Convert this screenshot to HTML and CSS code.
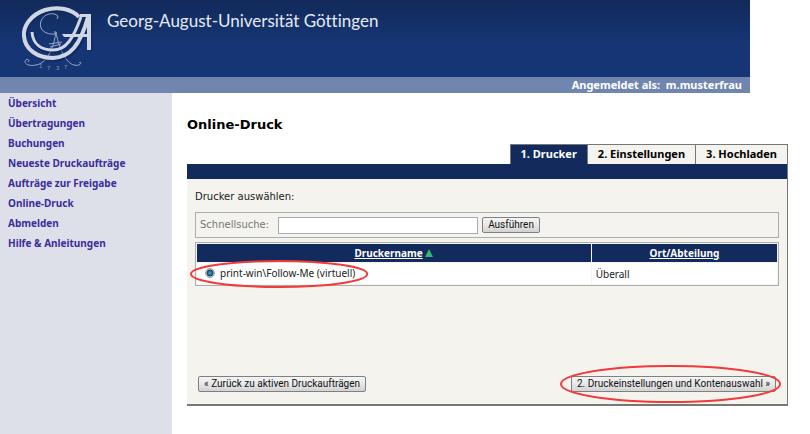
FILE: index.html
```html
<!DOCTYPE html>
<html lang="de">
<head>
<meta charset="utf-8">
<title>Online-Druck</title>
<link rel="stylesheet" href="styles.css">
</head>
<body>
<header class="header">
  <div class="banner">
    <svg class="logo" viewBox="0 0 76 70" aria-hidden="true">
      <g fill="none" stroke="#9aa8c8" stroke-width="1">
        <path d="M38 13C34 9 24 10 21 18C18 27 26 32 35 31M38 13L37 16M35 31L35 28"/>
        <path d="M36 29C34 43 28 60 16 62C7 64 3 59 6 57C8 55 10 58 8 59M36 29C38 42 45 60 54 62C62 64 62 57 59 60M29 41L42 39M30 44L41 41"/>
      </g>
      <g fill="none" stroke="#0b2355" stroke-opacity=".5" stroke-width="5">
        <path d="M60 15C53 7 39 4 26 8C11 13 4 25 5 34C6 48 19 56 34 56C54 55 63 42 67 16"/>
        <path d="M13 31C14 43 23 48 34 48C49 48 56 37 63 15"/>
        <path d="M70 13V48"/>
      </g>
      <g fill="none" stroke="#d0d6e5" stroke-width="3">
        <path d="M59 14C52 6 38 3 25 7C10 12 3 24 4 33C5 47 18 55 33 55C50 54 60 43 68 14" stroke-width="4"/>
        <path d="M12 29C13 42 22 47 33 47C46 47 53 36 61 14"/>
      </g>
      <path d="M60 11H71V47H67V34H44L42 31H67V14H60Z" fill="#d0d6e5"/>
      <g class="logo-year"><text x="19" y="65">1</text><text x="27" y="67">7</text><text x="36" y="67">3</text><text x="44" y="66">7</text></g>
    </svg>
    <div class="university">Georg-August-Universität Göttingen</div>
  </div>
  <div class="userbar">Angemeldet als:&nbsp; m.musterfrau</div>
</header>
<div class="layout">
  <nav class="sidebar">
    <a href="#">Übersicht</a>
    <a href="#">Übertragungen</a>
    <a href="#">Buchungen</a>
    <a href="#">Neueste Druckaufträge</a>
    <a href="#">Aufträge zur Freigabe</a>
    <a href="#">Online-Druck</a>
    <a href="#">Abmelden</a>
    <a href="#">Hilfe &amp; Anleitungen</a>
  </nav>
  <main class="content">
    <h1>Online-Druck</h1>
    <div class="tabs">
      <a class="tab active" href="#">1. Drucker</a>
      <a class="tab" href="#">2. Einstellungen</a>
      <a class="tab" href="#">3. Hochladen</a>
    </div>
    <form class="panel">
      <div class="panel-body">
        <p class="intro">Drucker auswählen:</p>
        <div class="search">
          <label for="quick">Schnellsuche:</label>
          <input id="quick" class="search-field" type="text">
          <button type="button">Ausführen</button>
        </div>
        <table class="printers">
          <thead>
            <tr>
              <th class="name-col"><a href="#">Druckername</a> <svg class="sort" viewBox="0 0 8 8" aria-hidden="true"><path d="M4 0L8 8H0Z"/></svg></th>
              <th><a href="#">Ort/Abteilung</a></th>
            </tr>
          </thead>
          <tbody>
            <tr>
              <td>
                <span class="choice">
                  <input id="followme" type="radio" name="printer" checked>
                  <label for="followme">print-win\Follow-Me (virtuell)</label>
                  <svg class="mark" viewBox="0 0 180 30" preserveAspectRatio="none" aria-hidden="true"><ellipse cx="90" cy="15" rx="88" ry="13"/></svg>
                </span>
              </td>
              <td>Überall</td>
            </tr>
          </tbody>
        </table>
        <div class="actions">
          <button type="button">« Zurück zu aktiven Druckaufträgen</button>
          <span class="next">
            <button type="button">2. Druckeinstellungen und Kontenauswahl »</button>
            <svg class="mark" viewBox="0 0 222 40" preserveAspectRatio="none" aria-hidden="true"><ellipse cx="111" cy="20" rx="109" ry="18"/></svg>
          </span>
        </div>
      </div>
    </form>
  </main>
</div>
</body>
</html>
```
FILE: styles.css
```css
* {
  box-sizing: border-box;
}

body {
  display: flex;
  flex-direction: column;
  min-height: 100vh;
  margin: 0;
  background: #fff;
  color: #222;
  font: 10px/16px "DejaVu Sans", sans-serif;
}

a {
  color: inherit;
}

.header {
  max-width: 750px;
}

.banner {
  display: flex;
  gap: 8px;
  height: 77px;
  padding: 3px 20px 0 20px;
  background: linear-gradient(#122a5a, #153574 55%);
}

.logo {
  flex: none;
  width: 76px;
  height: 70px;
}

.logo-year {
  fill: #8795b8;
  font: 6px "Liberation Sans", sans-serif;
}

.university {
  padding: 6px 0 0 3px;
  color: #e6eaf3;
  font: 17px/24px Lato, sans-serif;
  font-variant-ligatures: none;
}

.userbar {
  padding: 0 8px;
  background: #7186ae;
  color: #fff;
  font: bold 11px/16px "Noto Sans", sans-serif;
  text-align: right;
}

.layout {
  display: flex;
  flex: 1;
}

.sidebar {
  display: flex;
  flex: none;
  flex-direction: column;
  gap: 4px;
  width: 172px;
  padding: 2px 8px;
  background: #dde0e8;
  color: #3c2c9c;
  font: bold 10px/16px "Noto Sans", sans-serif;
}

.sidebar a,
.tab {
  text-decoration: none;
}

.content {
  flex: 1;
  padding: 24px 22px 24px 15px;
}

h1 {
  margin: 0 0 11px;
  color: #000;
  font-size: 13px;
  line-height: 16px;
}

.tabs {
  display: flex;
  justify-content: flex-end;
}

.tab {
  padding: 1px 10px 2px;
  border: 1px solid #777;
  border-width: 1px 0 0 1px;
  background: #f4f3ee;
  color: #000;
  font: bold 11px/16px "Noto Sans", sans-serif;
}

.tab:last-child {
  border-right-width: 1px;
}

.tab.active {
  background: #122b5c;
  color: #fff;
}

.panel {
  border: solid #777;
  border-width: 0 1px 2px 0;
  background: #f4f3ee;
}

.panel::before {
  display: block;
  height: 15px;
  background: #122b5c;
  content: "";
}

.panel-body {
  padding: 10px 8px 12px;
}

.intro {
  margin: 0 0 7px;
}

.search {
  display: flex;
  align-items: center;
  gap: 4px;
  height: 26px;
  padding: 0 4px;
  border: 1px solid #a9afaf;
  color: #777;
}

.search-field {
  width: 200px;
  height: 17px;
  margin-left: 5px;
  border: 1px solid #aaa;
  background: #fff;
}

button {
  height: 16px;
  padding: 0 5px;
  border: 1px solid #808080;
  border-radius: 2px;
  background: linear-gradient(#f4f4f4, #e8e8e8 50%, #d2d2d2);
  color: #111;
  font: 10px/12px Roboto, sans-serif;
}

.printers {
  width: 100%;
  margin-top: 4px;
  border: 1px solid #a9afaf;
  border-spacing: 1px;
  background: #f4f3ee;
}

.printers th {
  height: 18px;
  padding: 0;
  background: #122b5c;
  color: #fff;
  font: bold 10px/16px "Noto Sans", sans-serif;
}

.printers td {
  height: 21px;
  padding: 0 4px;
  background: #fff;
  font-family: "Noto Sans", sans-serif;
}

.name-col {
  width: 68%;
}

.sort {
  width: 8px;
  height: 8px;
  fill: #35b478;
}

.choice {
  display: inline-flex;
  position: relative;
  align-items: center;
  gap: 5px;
  padding-left: 4px;
}

.choice input {
  width: 10px;
  height: 10px;
  margin: 0;
  border: 1px solid #999;
  border-radius: 50%;
  background: radial-gradient(#2d98c4 1px, #153c5c 3px, #eee 4px);
  appearance: none;
}

.mark {
  position: absolute;
  inset: -6px -12px;
  width: calc(100% + 26px);
  height: calc(100% + 14px);
  fill: none;
  stroke: #f23a3a;
  stroke-width: 2;
  pointer-events: none;
}

.actions {
  display: flex;
  justify-content: space-between;
  align-items: flex-end;
  margin-top: 90px;
  padding: 0 3px;
}

.next {
  display: flex;
  position: relative;
}

.next .mark {
  inset: -12px -12px;
  width: calc(100% + 18px);
  height: calc(100% + 24px);
}
```
